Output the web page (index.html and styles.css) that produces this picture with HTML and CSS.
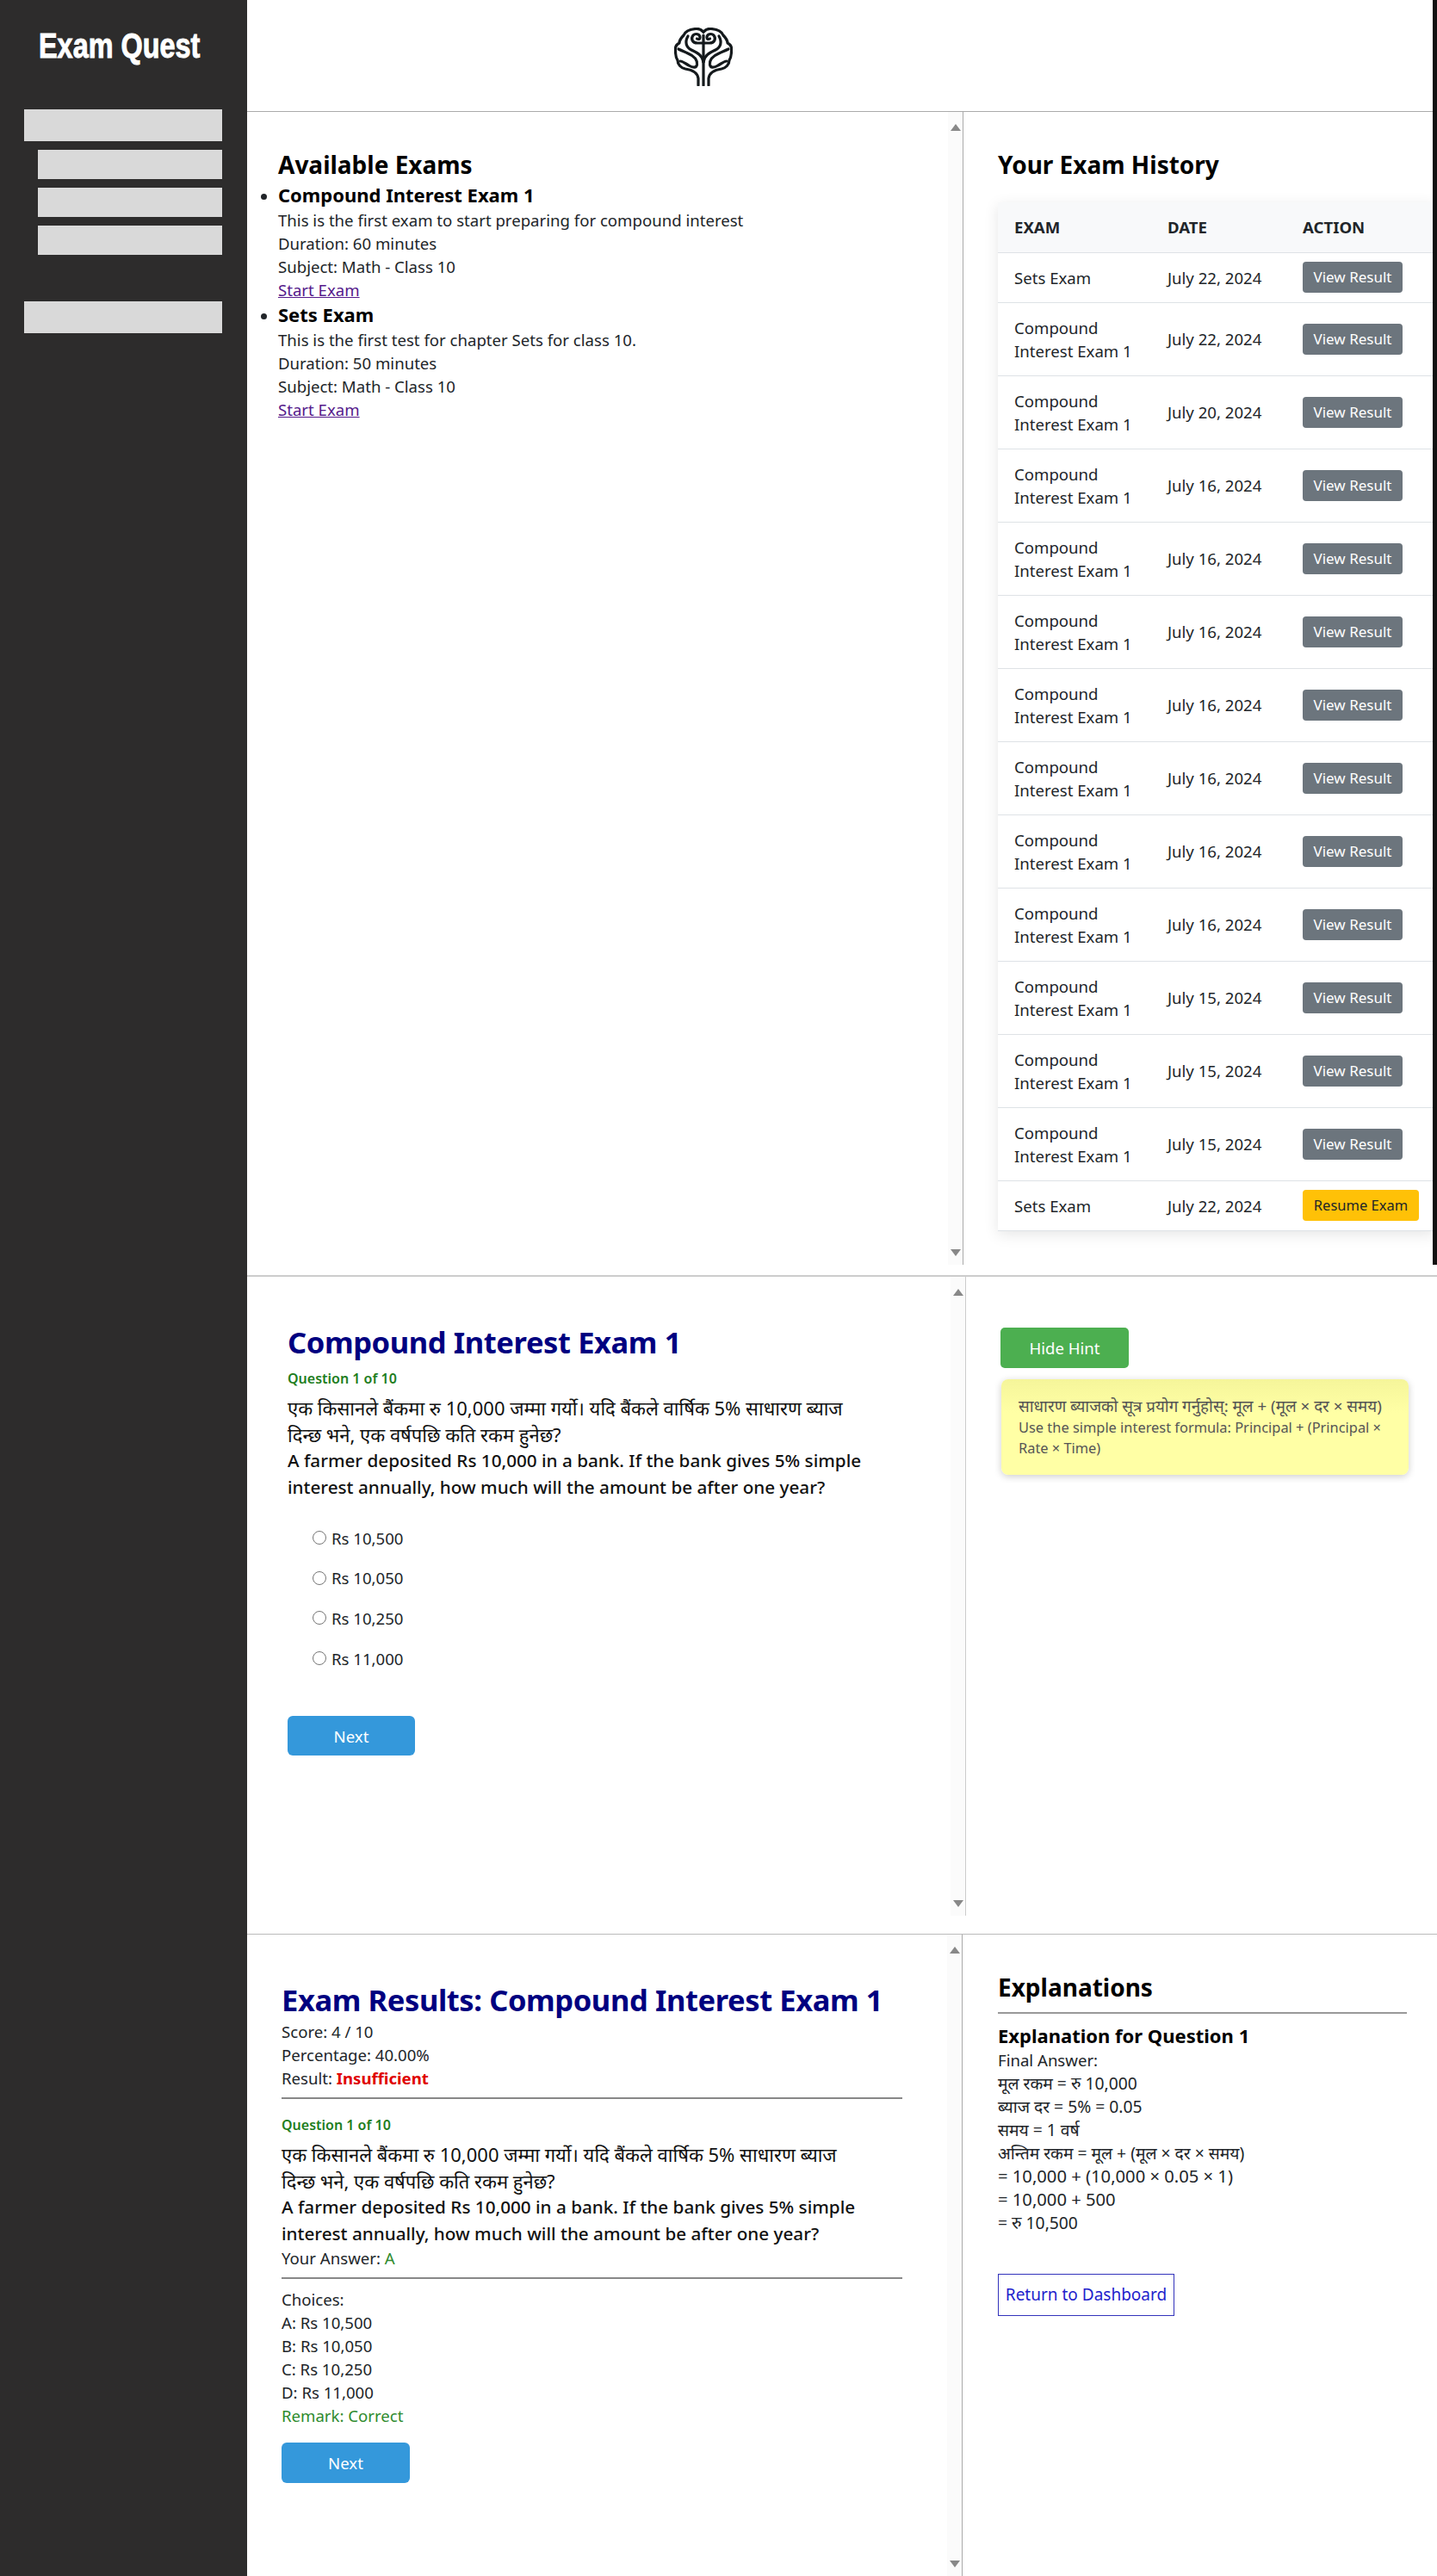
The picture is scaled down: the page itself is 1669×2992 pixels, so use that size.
FILE: index.html
```html
<!DOCTYPE html>
<html lang="en">
<head>
<meta charset="utf-8">
<title>Exam Quest</title>
<link rel="stylesheet" href="styles.css">
</head>
<body>
<aside class="sidebar">
  <div class="brand"><span class="brand-text">Exam Quest</span></div>
  <nav class="nav">
    <div class="nav-item"></div>
    <div class="nav-sub"></div>
    <div class="nav-sub"></div>
    <div class="nav-sub"></div>
    <div class="nav-item nav-last"></div>
  </nav>
</aside>
<main class="main">
  <section class="dash">
    <header class="top">
      <svg class="logo" viewBox="0 0 68 68" fill="none" stroke="#14191c" stroke-width="3.200" stroke-linecap="round" stroke-linejoin="round">
        <defs>
          <g id="half">
            <path d="M34 5C31 2 28 1 25 1.500C18 2 13 4 11 9C8 12 6 15 6 18C2 20 1 24 1.500 27C1.500 32 2 35 4 38C4 43 8 47 13 48C20 49 27 52 28 59V67"/>
            <path d="M34 18H27C21 18 19 13 22 9C25 6 30 8 30 11.500C30 13.500 28 14 26.500 13"/>
            <path d="M34 40C33 32 26 29 20 26C14 23 12 17 16 10"/>
            <path d="M5 25C9 27 12 28 16 30C23 33 27 38 26.500 43C26 47 22 47 17 44C13 42 10 39 7 39"/>
          </g>
        </defs>
        <use href="#half"/>
        <use href="#half" transform="translate(68 0) scale(-1 1)"/>
        <path d="M34 9V67"/>
      </svg>
    </header>
    <div class="panels panels-dash">
      <div class="left left-dash">
        <div class="content">
          <h2 class="h2">Available Exams</h2>
          <ul class="exam-list">
            <li>
              <h3 class="h3">Compound Interest Exam 1</h3>
              <div>This is the first exam to start preparing for compound interest</div>
              <div>Duration: 60 minutes</div>
              <div>Subject: Math - Class 10</div>
              <a class="visited" href="#">Start Exam</a>
            </li>
            <li>
              <h3 class="h3">Sets Exam</h3>
              <div>This is the first test for chapter Sets for class 10.</div>
              <div>Duration: 50 minutes</div>
              <div>Subject: Math - Class 10</div>
              <a class="visited" href="#">Start Exam</a>
            </li>
          </ul>
        </div>
        <div class="scrollbar"><i class="arrow-up"></i><i class="arrow-down"></i></div>
      </div>
      <div class="right right-dash">
        <h2 class="h2 history-title">Your Exam History</h2>
        <table class="history">
          <thead><tr><th class="c1">Exam</th><th class="c2">Date</th><th class="c3">Action</th></tr></thead>
          <tbody>
            <tr class="one"><td>Sets Exam</td><td>July 22, 2024</td><td><a class="btn">View Result</a></td></tr>
            <tr><td>Compound Interest Exam 1</td><td>July 22, 2024</td><td><a class="btn">View Result</a></td></tr>
            <tr><td>Compound Interest Exam 1</td><td>July 20, 2024</td><td><a class="btn">View Result</a></td></tr>
            <tr><td>Compound Interest Exam 1</td><td>July 16, 2024</td><td><a class="btn">View Result</a></td></tr>
            <tr><td>Compound Interest Exam 1</td><td>July 16, 2024</td><td><a class="btn">View Result</a></td></tr>
            <tr><td>Compound Interest Exam 1</td><td>July 16, 2024</td><td><a class="btn">View Result</a></td></tr>
            <tr><td>Compound Interest Exam 1</td><td>July 16, 2024</td><td><a class="btn">View Result</a></td></tr>
            <tr><td>Compound Interest Exam 1</td><td>July 16, 2024</td><td><a class="btn">View Result</a></td></tr>
            <tr><td>Compound Interest Exam 1</td><td>July 16, 2024</td><td><a class="btn">View Result</a></td></tr>
            <tr><td>Compound Interest Exam 1</td><td>July 16, 2024</td><td><a class="btn">View Result</a></td></tr>
            <tr><td>Compound Interest Exam 1</td><td>July 15, 2024</td><td><a class="btn">View Result</a></td></tr>
            <tr><td>Compound Interest Exam 1</td><td>July 15, 2024</td><td><a class="btn">View Result</a></td></tr>
            <tr><td>Compound Interest Exam 1</td><td>July 15, 2024</td><td><a class="btn">View Result</a></td></tr>
            <tr class="one"><td>Sets Exam</td><td>July 22, 2024</td><td><a class="btn btn-resume">Resume Exam</a></td></tr>
          </tbody>
        </table>
      </div>
    </div>
  </section>

  <section class="panels panels-exam">
    <div class="left left-exam">
      <div class="content exam-content">
        <h1 class="title">Compound Interest Exam 1</h1>
        <div class="qnum">Question 1 of 10</div>
        <div class="question">
          <div class="q-np">एक किसानले बैंकमा रु 10,000 जम्मा गर्यो। यदि बैंकले वार्षिक 5% साधारण ब्याज दिन्छ भने, एक वर्षपछि कति रकम हुनेछ?</div>
          <div>A farmer deposited Rs 10,000 in a bank. If the bank gives 5% simple interest annually, how much will the amount be after one year?</div>
        </div>
        <div class="options">
          <label class="option"><input type="radio" name="q1"><span>Rs 10,500</span></label>
          <label class="option"><input type="radio" name="q1"><span>Rs 10,050</span></label>
          <label class="option"><input type="radio" name="q1"><span>Rs 10,250</span></label>
          <label class="option"><input type="radio" name="q1"><span>Rs 11,000</span></label>
        </div>
        <button class="next next-exam">Next</button>
      </div>
      <div class="scrollbar"><i class="arrow-up"></i><i class="arrow-down"></i></div>
    </div>
    <div class="right right-exam">
      <button class="hint-btn">Hide Hint</button>
      <div class="hint">
        <div class="hint-np">साधारण ब्याजको सूत्र प्रयोग गर्नुहोस्: मूल + (मूल × दर × समय)</div>
        <div>Use the simple interest formula: Principal + (Principal × Rate × Time)</div>
      </div>
    </div>
  </section>

  <section class="panels panels-result">
    <div class="left left-result">
      <div class="content result-content">
        <h1 class="title result-title">Exam Results: Compound Interest Exam 1</h1>
        <div>Score: 4 / 10</div>
        <div>Percentage: 40.00%</div>
        <div>Result: <strong class="bad">Insufficient</strong></div>
        <hr class="rule rule-a">
        <div class="qnum">Question 1 of 10</div>
        <div class="question">
          <div class="q-np">एक किसानले बैंकमा रु 10,000 जम्मा गर्यो। यदि बैंकले वार्षिक 5% साधारण ब्याज दिन्छ भने, एक वर्षपछि कति रकम हुनेछ?</div>
          <div>A farmer deposited Rs 10,000 in a bank. If the bank gives 5% simple interest annually, how much will the amount be after one year?</div>
        </div>
        <div>Your Answer: <span class="good">A</span></div>
        <hr class="rule rule-b">
        <div>Choices:</div>
        <div>A: Rs 10,500</div>
        <div>B: Rs 10,050</div>
        <div>C: Rs 10,250</div>
        <div>D: Rs 11,000</div>
        <div class="good">Remark: Correct</div>
        <button class="next next-result">Next</button>
      </div>
      <div class="scrollbar"><i class="arrow-up"></i><i class="arrow-down"></i></div>
    </div>
    <div class="right right-result">
      <h2 class="h2">Explanations</h2>
      <hr class="rule rule-c">
      <h3 class="h3">Explanation for Question 1</h3>
      <div class="expl">
        <div>Final Answer:</div>
        <div class="calc">मूल रकम = रु 10,000</div>
        <div class="calc">ब्याज दर = 5% = 0.05</div>
        <div class="calc">समय = 1 वर्ष</div>
        <div class="calc">अन्तिम रकम = मूल + (मूल × दर × समय)</div>
        <div class="calc-num">= 10,000 + (10,000 × 0.05 × 1)</div>
        <div class="calc-num">= 10,000 + 500</div>
        <div class="calc">= रु 10,500</div>
      </div>
      <a class="back" href="#">Return to Dashboard</a>
    </div>
  </section>
</main>
</body>
</html>
```
FILE: styles.css
```css
* { box-sizing: border-box; }
html, body { margin: 0; padding: 0; }
body {
  display: flex;
  width: 1669px;
  height: 2992px;
  overflow: hidden;
  background: #fff;
  color: #212529;
  font-family: "Noto Sans", "Open Sans", sans-serif;
  font-size: 18.600px;
  line-height: 27px;
}
.sidebar { width: 287px; flex: none; background: #2d2c2c; }
.brand {
  padding: 31px 0 0 45px;
  height: 127px;
  font-family: "Liberation Sans", sans-serif;
  font-weight: 700;
  font-size: 40px;
  line-height: 44px;
  color: #fff;
  -webkit-text-stroke: 1px #fff;
}
.brand-text { display: inline-block; white-space: nowrap; transform: scaleX(.81); transform-origin: left center; }
.nav { display: flex; flex-direction: column; align-items: flex-end; padding-right: 29px; gap: 10px; }
.nav-item { width: 230px; height: 37px; background: #d9d9d9; }
.nav-sub { width: 214px; height: 34px; background: #d9d9d9; }
.nav-last { margin-top: 44px; }
.main { flex: 1; min-width: 0; }
.dash { border-right: 5px solid #111; height: 1469px; }
.top { height: 130px; border-bottom: 1px solid #aaa; padding: 32px 0 0 496px; }
.logo { width: 68px; height: 68px; display: block; }
.panels { display: flex; }
.panels-dash { height: 1339px; }
.panels-exam { margin-top: 12px; height: 744px; border-top: 2px solid #ccc; }
.panels-result { margin-top: 21px; height: 746px; border-top: 1px solid #bbb; }
.left { display: flex; flex: none; border-right: 1px solid #aaa; }
.left-dash { width: 832px; }
.left-exam { width: 835px; border-right-color: #ccc; }
.left-result { width: 831px; }
.content { flex: 1; min-width: 0; padding: 41px 0 0 36px; }
.scrollbar {
  width: 17px;
  flex: none;
  display: flex;
  flex-direction: column;
  justify-content: space-between;
  align-items: center;
  padding: 14px 0 10px;
  background: #fbfbfb;
}
.arrow-up, .arrow-down { display: block; width: 0; height: 0; border-left: 6px solid transparent; border-right: 6px solid transparent; }
.arrow-up { border-bottom: 8px solid #888; }
.arrow-down { border-top: 8px solid #888; }
.right { flex: 1; min-width: 0; overflow: hidden; padding-left: 40px; }
.h2 { margin: 0; font-size: 28px; line-height: 40px; font-weight: 700; color: #000; }
.h3 { margin: 0; font-size: 22px; line-height: 31px; font-weight: 700; color: #000; }
.exam-list { margin: 0; padding: 0; }
.visited { color: #551a8b; }
.right-dash { padding-top: 41px; }
.history-title { margin-bottom: 24px; }
.history { width: 508px; table-layout: fixed; border-collapse: collapse; box-shadow: 0 4px 16px rgba(0, 0, 0, .1); background: #fff; }
.c1 { width: 178px; }
.c2 { width: 157px; }
.c3 { width: 173px; }
.history th {
  height: 58px;
  padding: 0 19px;
  text-align: left;
  background: #f8f9fa;
  border-bottom: 1px solid #dee2e6;
  font-size: 18.600px;
  font-weight: 700;
  text-transform: uppercase;
  color: #212529;
}
.history td { height: 85px; padding: 0 19px; border-bottom: 1px solid #dee2e6; color: #212529; }
.history .one td { height: 58px; }
.btn { display: inline-block; height: 36px; width: 116px; text-align: center; border-radius: 4px; background: #6c757d; color: #fff; font-size: 17px; line-height: 36px; vertical-align: middle; white-space: nowrap; }
.btn-resume { width: 135px; background: #ffc107; color: #212529; font-size: 16.500px; }
.exam-content { padding: 49px 0 0 47px; }
.title { margin: 0; font-size: 34.500px; letter-spacing: -.4px; line-height: 54px; font-weight: 700; color: #000080; white-space: nowrap; }
.qnum { margin-top: 4px; font-size: 16px; line-height: 22px; font-weight: 600; color: #1e7e1e; }
.question { margin-top: 8px; font-size: 20.700px; line-height: 30.500px; font-weight: 500; color: #111; max-width: 700px; }
.q-np { font-size: 22px; font-weight: 400; max-width: 682px; }
.options { margin: 21px 0 44px 29px; }
.option { display: flex; align-items: center; height: 46.600px; gap: 6px; }
.option input { margin: 0; width: 16px; height: 16px; flex: none; }
.next { display: block; border: 0; background: #3498db; color: #fff; font: inherit; border-radius: 6px; }
.next-exam { width: 148px; height: 46px; }
.next-result { width: 149px; height: 47px; margin-top: 18px; }
.right-exam { padding-top: 59px; }
.hint-btn { display: block; width: 149px; height: 47px; border: 0; border-radius: 5px; background: #4caf50; color: #fff; font: inherit; }
.hint {
  width: 473px;
  height: 111px;
  margin: 13px 0 0 1px;
  padding: 19px 15px 19px 20px;
  border-radius: 8px;
  background: linear-gradient(#f5f59a, #ffffa5 35%);
  box-shadow: 0 2px 8px rgba(0, 0, 0, .2);
  color: #555;
  font-size: 16.400px;
  line-height: 24.500px;
}
.hint-np { font-size: 18.800px; }
.result-content { padding: 52px 0 0 40px; }
.result-title { line-height: 47px; }
.bad { color: #e00000; font-weight: 700; }
.good { color: #2e8b2e; }
.rule { border: 0; margin: 0; height: 2px; background: #888; }
.rule-a { width: 721px; margin: 9px 0 19px; }
.rule-b { width: 721px; margin: 9px 0 10px; }
.right-result { padding: 41px 0 0 41px; }
.rule-c { width: 475px; margin: 9px 0 10px; background: #999; }
.expl { margin-top: -1px; }
.calc { font-size: 19.300px; }
.calc-num { font-size: 20.200px; }
.back { display: block; width: 205px; height: 49px; margin-top: 46px; border: 1px solid #3333bb; color: #2222cc; text-decoration: none; line-height: 47px; text-align: center; font-size: 19px; }
```
